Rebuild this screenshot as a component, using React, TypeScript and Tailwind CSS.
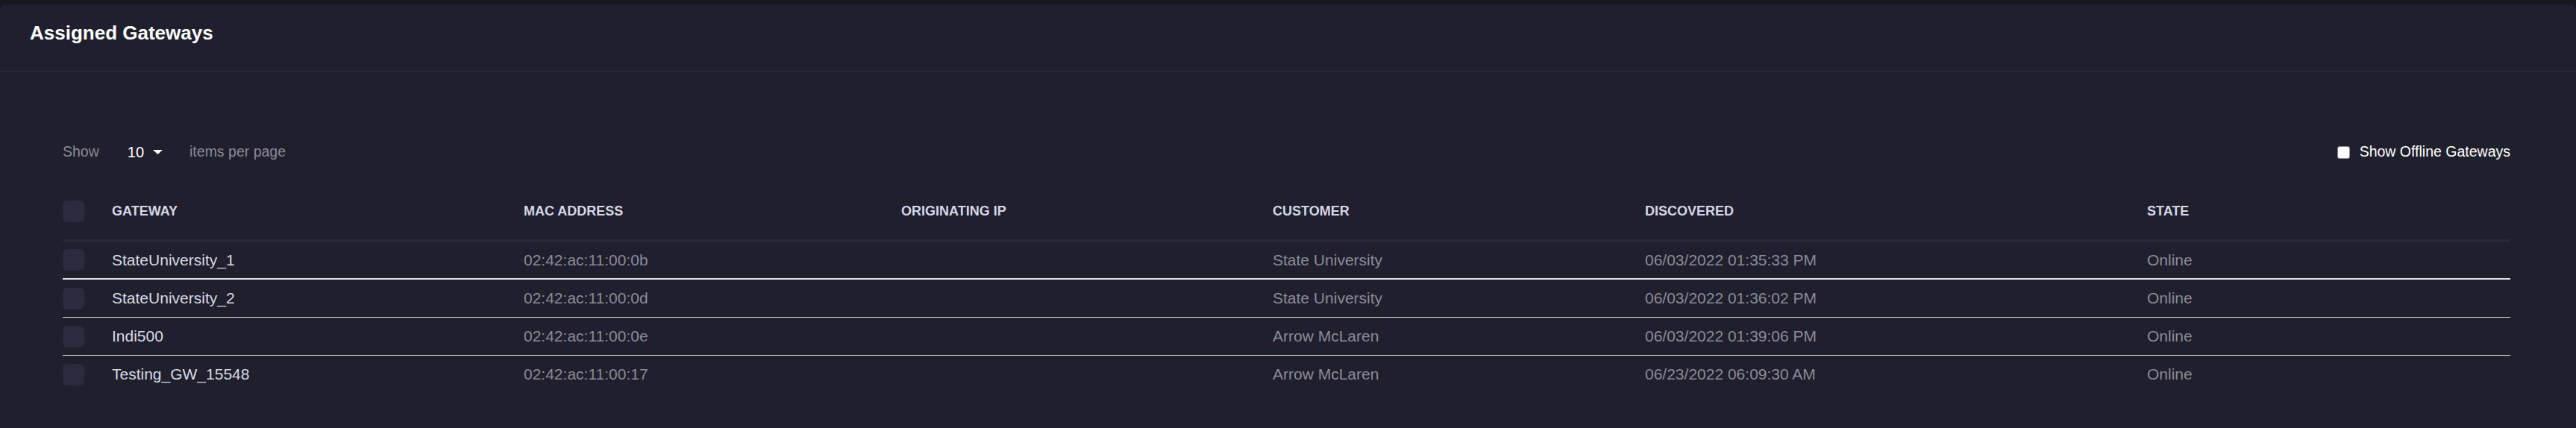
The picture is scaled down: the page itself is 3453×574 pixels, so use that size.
import { memo } from "react";

type Gateway = {
  name: string;
  mac: string;
  ip: string;
  customer: string;
  discovered: string;
  state: string;
};

const gateways: Gateway[] = [
  {
    name: "StateUniversity_1",
    mac: "02:42:ac:11:00:0b",
    ip: "",
    customer: "State University",
    discovered: "06/03/2022 01:35:33 PM",
    state: "Online",
  },
  {
    name: "StateUniversity_2",
    mac: "02:42:ac:11:00:0d",
    ip: "",
    customer: "State University",
    discovered: "06/03/2022 01:36:02 PM",
    state: "Online",
  },
  {
    name: "Indi500",
    mac: "02:42:ac:11:00:0e",
    ip: "",
    customer: "Arrow McLaren",
    discovered: "06/03/2022 01:39:06 PM",
    state: "Online",
  },
  {
    name: "Testing_GW_15548",
    mac: "02:42:ac:11:00:17",
    ip: "",
    customer: "Arrow McLaren",
    discovered: "06/23/2022 06:09:30 AM",
    state: "Online",
  },
];

const cols = "grid grid-cols-[66px_552px_506px_498px_499px_673px_1fr] items-center";

function RowCheck() {
  return <div className="w-[29px] h-[29px] rounded-[6px] bg-[#2a2b3d]" />;
}

function AppComponent() {
  return (
    <div
      className="h-[574px] bg-[#16161f] pt-[6px] overflow-hidden"
      style={{ fontFamily: '"Liberation Sans", Arial, sans-serif' }}
    >
      <div className="h-full bg-[#1f1f2d] rounded-tl-[8px] rounded-tr-[8px]">
        {/* Card header */}
        <div className="h-[90px] border-b border-b-[#2c2c3c] px-[40px] pt-[23px]">
          <h1 className="text-[26px] leading-[31px] font-bold text-white">
            Assigned Gateways
          </h1>
        </div>

        <div className="pl-[84px] pr-[88px] pt-[91px]">
          {/* Toolbar */}
          <div className="flex items-center justify-between h-[34px] text-[19.5px]">
            <div className="flex items-center">
              <span className="text-[#8a8a97]">Show</span>
              <button className="ml-[38px] flex items-center text-white">
                <span className="text-[20px]">10</span>
                <svg
                  className="ml-[12px]"
                  width="13"
                  height="6"
                  viewBox="0 0 13 6"
                >
                  <path d="M0 0 L13 0 L6.5 6 Z" fill="#ffffff" />
                </svg>
              </button>
              <span className="ml-[36px] text-[#8a8a97]">items per page</span>
            </div>
            <label className="flex items-center text-white">
              <span className="w-[17px] h-[17px] rounded-[3px] bg-white border border-[#8a8a8a]" />
              <span className="ml-[13px]">Show Offline Gateways</span>
            </label>
          </div>

          {/* Table header */}
          <div
            className={clsxJoin(
              cols,
              "mt-[25px] h-[78px] border-b-[3px] border-b-[#2a2a3d] text-[18px] font-bold text-[#d6d6e6]"
            )}
          >
            <RowCheck />
            <div>GATEWAY</div>
            <div>MAC ADDRESS</div>
            <div>ORIGINATING IP</div>
            <div>CUSTOMER</div>
            <div>DISCOVERED</div>
            <div>STATE</div>
          </div>

          {/* Rows */}
          {gateways.map((g, i) => (
            <div
              key={g.name}
              className={clsxJoin(
                cols,
                "text-[21px]",
                i === 0 ? "h-[51px] border-b-2 border-b-[#e4e4e4]" : "",
                i === 1 || i === 2 ? "h-[51px] border-b border-b-[#dadada]" : "",
                i === 3 ? "h-[50px]" : ""
              )}
            >
              <RowCheck />
              <div className="text-[#d9d9e3]">{g.name}</div>
              <div className="text-[#8b8b98]">{g.mac}</div>
              <div className="text-[#8b8b98]">{g.ip}</div>
              <div className="text-[#8b8b98]">{g.customer}</div>
              <div className="text-[#8b8b98]">{g.discovered}</div>
              <div className="text-[#8b8b98]">{g.state}</div>
            </div>
          ))}
        </div>
      </div>
    </div>
  );
}

function clsxJoin(...parts: string[]) {
  return parts.filter(Boolean).join(" ");
}

const App = memo(AppComponent);
export default App;
